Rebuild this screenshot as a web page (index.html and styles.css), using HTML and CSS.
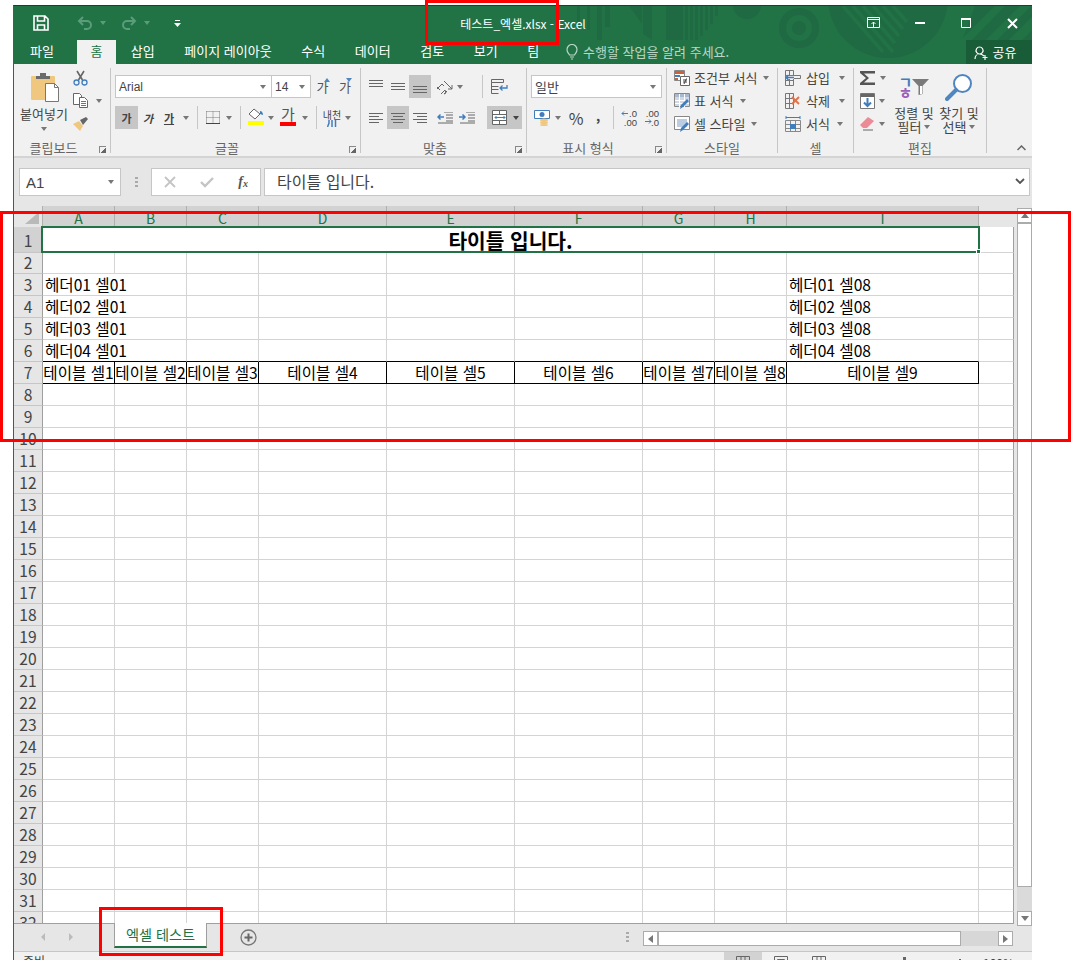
FILE: index.html
```html
<!doctype html>
<html lang="ko">
<head>
	<meta charset="UTF-8">
	<title>테스트_엑셀.xlsx - Excel</title>
	<link rel="stylesheet" href="styles.css">
</head>
<body>
<div class="app">
	<div class="head">
		<!-- title bar artwork -->
		<svg class="decor" width="1018" height="58" viewBox="14 6 1018 58">
			<g fill="#1f6a42">
				<rect x="577" y="0" width="3" height="30"/><rect x="587" y="0" width="3" height="30"/>
				<rect x="597" y="0" width="5" height="40"/><rect x="605" y="0" width="5" height="27"/>
				<path d="M625 0h17v24z"/><path d="M643 0h9v40l-9-6z"/>
				<rect x="666" y="0" width="17" height="40"/>
				<rect x="685" y="0" width="3" height="40"/><rect x="690" y="0" width="3" height="40"/><rect x="695" y="0" width="3" height="40"/><rect x="700" y="0" width="3" height="36"/><rect x="705" y="0" width="3" height="30"/><rect x="710" y="0" width="3" height="24"/><rect x="715" y="0" width="3" height="16"/>
				<circle cx="747" cy="5" r="14"/>
				<circle cx="799" cy="28" r="20"/>
				<circle cx="888" cy="-2" r="60"/>
				<path d="M985 64l47-47v-12l-59 59zM1010 64l22-22v-12l-34 34z"/>
				<path d="M975 6h20l-32 32zM1005 6h15l-45 45 -6-8z"/>
			</g>
			<circle cx="799" cy="28" r="13" fill="#217346"/>
			<circle cx="799" cy="28" r="7" fill="#1f6a42"/>
			<path d="M843 6l40 46M853 6l40 46M863 6l32 37M873 6l26 30M883 6l20 23M893 6l14 16" stroke="#217346" stroke-width="3.5" fill="none"/>
		</svg>
		<div class="titlebar">
			<div class="qat">
				<svg class="i-save" width="16" height="16" viewBox="0 0 16 16"><path d="M1 1h11l3 3v11H1z M4.500 1v5h7V1 M4.500 15v-5h7v5" fill="none" stroke="#fff" stroke-width="1.600"/></svg>
				<svg class="i-undo" width="16" height="14" viewBox="0 0 16 14"><path d="M6 1L2 5l4 4M2 5h8a4 4 0 0 1 0 8H7" fill="none" stroke="#5b9c7b" stroke-width="2"/></svg>
				<span class="caret dim"></span>
				<svg class="i-redo" width="16" height="14" viewBox="0 0 16 14"><path d="M10 1l4 4-4 4M14 5H6a4 4 0 0 0 0 8h3" fill="none" stroke="#5b9c7b" stroke-width="2"/></svg>
				<span class="caret dim"></span>
				<svg class="i-custom" width="7" height="8" viewBox="0 0 7 8"><path d="M1 1h5v1H1z M0 4h7L3.500 8z" fill="#fff"/></svg>
			</div>
			<div class="doc-title">테스트_엑셀.xlsx - Excel</div>
			<div class="winbtns">
				<div class="winbtn"><svg width="14" height="12" viewBox="0 0 14 12"><path d="M.500 .500h12v10h-12z M.500 2.500h12" fill="none" stroke="#fff"/><path d="M6.500 10V5M4.500 7l2-2 2 2" fill="none" stroke="#fff"/></svg></div>
				<div class="winbtn"><svg width="10" height="3" viewBox="0 0 10 3"><path d="M0 0h10v2H0z" fill="#fff"/></svg></div>
				<div class="winbtn"><svg width="11" height="11" viewBox="0 0 11 11"><path d="M.500 .500h9v9h-9z" fill="none" stroke="#fff"/><path d="M0 0h10v2H0z" fill="#fff"/></svg></div>
				<div class="winbtn"><svg width="11" height="11" viewBox="0 0 11 11"><path d="M1 1l9 9M10 1l-9 9" fill="none" stroke="#fff" stroke-width="2"/></svg></div>
			</div>
		</div>
		<div class="tabs">
			<div class="tab first">파일</div>
			<div class="tab active">홈</div>
			<div class="tab">삽입</div>
			<div class="tab">페이지 레이아웃</div>
			<div class="tab">수식</div>
			<div class="tab">데이터</div>
			<div class="tab">검토</div>
			<div class="tab">보기</div>
			<div class="tab">팀</div>
			<div class="tellme">
				<svg width="12" height="16" viewBox="0 0 12 16"><path d="M3.500 11C2.500 9 1 8.500 1 5.500a5 5 0 0 1 10 0c0 3-1.500 3.500-2.500 5.500zM4 13h4M5 15h2" fill="none" stroke="#b9d6c6" stroke-width="1.200"/></svg>
				<span>수행할 작업을 알려 주세요.</span>
			</div>
			<div class="share">
				<svg width="15" height="15" viewBox="0 0 15 15"><path d="M1 14c0-3 2-5 4.500-5S9 10 10 11M5.500 9a3.500 3.500 0 1 1 .1 0M11 10v5M8.500 12.500h5" fill="none" stroke="#fff" stroke-width="1.200"/></svg>
				<span>공유</span>
			</div>
		</div>
	</div>

	<div class="ribbon">
		<div class="group g-clip">
			<div class="g-body">
				<div class="paste">
					<svg width="29" height="30" viewBox="0 0 29 30">
						<rect x="0" y="4" width="24" height="24" rx="1" fill="#efc77f"/>
						<path d="M5 7V4h4V1h6v3h4v3z" fill="#6b6b6b"/>
						<path d="M14.500 11.500h9l4 4v14h-13z" fill="#fff" stroke="#777"/>
						<path d="M23.500 11.500v4h4" fill="none" stroke="#777"/>
					</svg>
					<div class="paste-label">붙여넣기</div>
					<span class="caret"></span>
				</div>
				<div class="stack3 clip-tools">
					<div class="row3"><svg width="15" height="16" viewBox="0 0 15 16"><path d="M4 1l5.500 9M11 1L5.500 10" stroke="#666" stroke-width="1.600" fill="none"/><circle cx="3.500" cy="12.500" r="2.500" fill="none" stroke="#3f7dbd" stroke-width="1.300"/><circle cx="11.500" cy="12.500" r="2.500" fill="none" stroke="#3f7dbd" stroke-width="1.300"/></svg></div>
					<div class="row3"><svg width="16" height="15" viewBox="0 0 16 15"><path d="M.500 .500h6l2 2v9h-8z" fill="#fff" stroke="#666"/><path d="M6.500 4.500h5l3 3v7h-8z" fill="#fff" stroke="#666"/><path d="M8 8.500h5M8 10.500h5M8 12.500h5" stroke="#3f7dbd"/></svg><span class="caret c-copy"></span></div>
					<div class="row3"><svg width="16" height="14" viewBox="0 0 16 14"><path d="M0 7l6-3 4 5-3 5z" fill="#efc77f"/><path d="M7 3l6-3 2 2-5 6z" fill="#666"/></svg></div>
				</div>
			</div>
			<div class="g-label">클립보드</div>
			<span class="launcher"></span>
		</div>

		<div class="group g-font">
			<div class="g-body rows">
				<div class="row">
					<div class="combo w157"><span class="latin">Arial</span><span class="caret"></span></div>
					<div class="combo w40"><span class="latin">14</span><span class="caret"></span></div>
					<div class="btn w18 ml7 grow"><span class="gga">가</span><span class="tri up"></span></div>
					<div class="btn w18"><span class="gga">가</span><span class="tri down"></span></div>
				</div>
				<div class="row">
					<div class="btn w23 on fx-b">가</div>
					<div class="btn w20 fx-i">가</div>
					<div class="btn w22 fx-u">가</div>
					<div class="btn w12"><span class="caret"></span></div>
					<div class="sep"></div>
					<div class="btn w20"><svg width="14" height="13" viewBox="0 0 14 13"><path d="M.500 .500h13M.500 6.500h13M.500 .500v12M7 .500v12M13.500 .500v12" stroke="#777" stroke-dasharray="1 1" fill="none"/><path d="M0 12.500h14" stroke="#444"/></svg></div>
					<div class="btn w12"><span class="caret"></span></div>
					<div class="sep"></div>
					<div class="btn w19 swatch"><svg width="16" height="12" viewBox="0 0 16 12"><path d="M6 1l6 5-5 5-6-5z" fill="#fff" stroke="#666"/><path d="M12 3c2 0 3 2 3 4l-3-1z" fill="#3f7dbd"/></svg><span class="bar yellow"></span></div>
					<div class="btn w12"><span class="caret"></span></div>
					<div class="btn w22 swatch"><span class="gga big">가</span><span class="bar red"></span></div>
					<div class="btn w12"><span class="caret"></span></div>
					<div class="sep"></div>
					<div class="btn w20 ruby"><span>내천</span><svg width="10" height="7" viewBox="0 0 10 7"><path d="M2 0v3L.500 7M5 0v7M8.500 0v7" stroke="#3f7dbd" stroke-width="1.500" fill="none"/></svg></div>
					<div class="btn w12"><span class="caret"></span></div>
				</div>
			</div>
			<div class="g-label">글꼴</div>
			<span class="launcher"></span>
		</div>

		<div class="group g-align">
			<div class="g-body rows">
				<div class="row">
					<div class="btn w22 a-top"><svg width="14" height="7" viewBox="0 0 14 7"><path d="M0 .500h14M0 3.500h14M0 6.500h14" stroke="#666"/></svg></div>
					<div class="btn w22"><svg width="14" height="7" viewBox="0 0 14 7"><path d="M0 .500h14M0 3.500h14M0 6.500h14" stroke="#666"/></svg></div>
					<div class="btn w22 on a-bot"><svg width="14" height="7" viewBox="0 0 14 7"><path d="M0 .500h14M0 3.500h14M0 6.500h14" stroke="#666"/></svg></div>
					<div class="btn w20 ml4"><svg width="18" height="16" viewBox="0 0 18 16"><path d="M1 10l5-5 2 2M1 8l3 3M5 15l4-4 1 3-2 1 3-3M8 2l8 8M16 6v4h-4" stroke="#666" fill="none"/></svg></div>
					<div class="btn w10"><span class="caret"></span></div>
					<div class="sep ml17"></div>
					<div class="btn w22"><svg width="17" height="15" viewBox="0 0 17 15"><path d="M.500 .500h12v3h-12zM.500 3.500v11M.500 7.500h7M.500 10.500h7M.500 14.500h7" stroke="#666" fill="none"/><path d="M16 6v3h-7M11.500 6.500L9 9l2.500 2.500" stroke="#3f7dbd" fill="none" stroke-width="1.300"/></svg></div>
				</div>
				<div class="row">
					<div class="btn w22"><svg width="14" height="10" viewBox="0 0 14 10"><path d="M0 .500h14M0 3.500h10M0 6.500h14M0 9.500h10" stroke="#666"/></svg></div>
					<div class="btn w22 on"><svg width="14" height="10" viewBox="0 0 14 10"><path d="M0 .500h14M2 3.500h10M0 6.500h14M2 9.500h10" stroke="#666"/></svg></div>
					<div class="btn w22"><svg width="14" height="10" viewBox="0 0 14 10"><path d="M0 .500h14M4 3.500h10M0 6.500h14M4 9.500h10" stroke="#666"/></svg></div>
					<div class="btn w22 ml3"><svg width="16" height="12" viewBox="0 0 16 12"><path d="M7 .500h9M9 3.500h7M9 6.500h7M9 9.500h7M1 11.500h15" stroke="#666" transform="translate(0 -.5)"/><path d="M7 5H1M3.500 2.500L1 5l2.500 2.500" stroke="#3f7dbd" stroke-width="1.500" fill="none"/></svg></div>
					<div class="btn w22"><svg width="16" height="12" viewBox="0 0 16 12"><path d="M7 .500h9M9 3.500h7M9 6.500h7M9 9.500h7M1 11.500h15" stroke="#666" transform="translate(0 -.5)"/><path d="M0 5h6M3.500 2.500L6 5 3.500 7.500" stroke="#3f7dbd" stroke-width="1.500" fill="none"/></svg></div>
					<div class="btn merge on">
						<svg width="18" height="15" viewBox="0 0 18 15"><path d="M.500 .500h14v14h-14zM.500 4.500h14M.500 10.500h14M7.500 .500v4M7.500 10.500v4" transform="translate(1 0)" fill="#fff" stroke="#666"/><path d="M4 7.500h10M5.500 6L4 7.500 5.500 9M12.500 6L14 7.500 12.500 9" stroke="#3f7dbd" fill="none"/></svg>
						<span class="caret dark"></span>
					</div>
				</div>
			</div>
			<div class="g-label">맞춤</div>
			<span class="launcher"></span>
		</div>

		<div class="group g-num">
			<div class="g-body rows">
				<div class="row">
					<div class="combo w131"><span>일반</span><span class="caret"></span></div>
				</div>
				<div class="row">
					<div class="btn w20 ml1"><svg width="16" height="16" viewBox="0 0 16 16"><path d="M.500 .500h15v8h-15z" fill="#fff" stroke="#3f7dbd"/><circle cx="8" cy="4.500" r="2.500" fill="#3f7dbd"/><ellipse cx="10" cy="10" rx="4" ry="1.500" fill="#efc77f"/><ellipse cx="10" cy="12.500" rx="4" ry="1.500" fill="#efc77f"/><ellipse cx="10" cy="15" rx="4" ry="1" fill="#efc77f"/></svg></div>
					<div class="btn w12"><span class="caret"></span></div>
					<div class="btn w24 sym">%</div>
					<div class="btn w20 sym comma">,</div>
					<div class="sep"></div>
					<div class="btn w22 dec"><span class="tiny">.0</span><span class="tiny">.00</span><svg class="dec-arrow left" width="7" height="5" viewBox="0 0 7 5"><path d="M7 2.500H1M3 .500l-2 2 2 2" stroke="#3f7dbd" fill="none"/></svg></div>
					<div class="btn w22 dec"><span class="tiny">.00</span><span class="tiny">.0</span><svg class="dec-arrow right" width="7" height="5" viewBox="0 0 7 5"><path d="M0 2.500h6M4 .500l2 2-2 2" stroke="#3f7dbd" fill="none"/></svg></div>
				</div>
			</div>
			<div class="g-label">표시 형식</div>
			<span class="launcher"></span>
		</div>

		<div class="group g-style">
			<div class="g-body">
				<div class="stack3">
					<div class="row3"><svg width="16" height="16" viewBox="0 0 16 16"><path d="M.500 .500h10v10h-10z" fill="#fff" stroke="#888"/><path d="M1 1h9v3H1z" fill="#d0603a"/><path d="M1 5h5v2H1z" fill="#3f7dbd"/><path d="M1 8h3v2H1z" fill="#d0603a"/><path d="M6.500 6.500h9v9h-9z" fill="#fff" stroke="#666"/><path d="M9 10h4M9 12h4M12.500 8.500l-2.500 5.500" stroke="#444" fill="none"/></svg><span>조건부 서식</span><span class="caret"></span></div>
					<div class="row3"><svg width="16" height="16" viewBox="0 0 16 16"><path d="M.500 .500h15v13h-15z" fill="#fff" stroke="#888"/><path d="M1 1h14v3H1z" fill="#a9b9cf"/><path d="M1 4h14v9H1z" fill="#cfd9e6"/><path d="M5.500 1v13M10.500 1v13M1 7.500h14M1 10.500h14" stroke="#fff"/><path d="M15 8l-6 6-3 2 1-4 6-6z" fill="#3f7dbd"/></svg><span>표 서식</span><span class="caret"></span></div>
					<div class="row3"><svg width="16" height="16" viewBox="0 0 16 16"><path d="M.500 .500h15v13h-15z" fill="#fff" stroke="#888"/><path d="M3 3h10v8H3z" fill="#bccde0"/><path d="M15 8l-6 6-3 2 1-4 6-6z" fill="#3f7dbd"/></svg><span>셀 스타일</span><span class="caret"></span></div>
				</div>
			</div>
			<div class="g-label">스타일</div>
		</div>

		<div class="group g-cells">
			<div class="g-body">
				<div class="stack3">
					<div class="row3"><svg width="16" height="16" viewBox="0 0 16 16"><path d="M.500 .500h8v15h-8zM.500 5.500h8M.500 10.500h8M4.500 .500v15M9 5.500h6.500v3H9" fill="none" stroke="#777"/><path d="M1 6h8v3H1z" fill="#f1f1f1"/><path d="M9 7.500H1M3.500 5L1 7.500 3.500 10" stroke="#3f7dbd" stroke-width="1.500" fill="none"/></svg><span>삽입</span><span class="caret c-far"></span></div>
					<div class="row3"><svg width="16" height="16" viewBox="0 0 16 16"><path d="M.500 .500h8v15h-8zM.500 5.500h8M.500 10.500h8M4.500 .500v15" fill="none" stroke="#777"/><path d="M7 4l7 7M14 4l-7 7" stroke="#e0714a" stroke-width="1.800"/></svg><span>삭제</span><span class="caret c-far"></span></div>
					<div class="row3"><svg width="16" height="16" viewBox="0 0 16 16"><path d="M.500 4.500h15v11h-15zM.500 8.500h15M.500 12.500h15M5.500 4.500v11M10.500 4.500v11" fill="none" stroke="#888"/><path d="M5 8h6v5H5z" fill="#3f7dbd"/><path d="M1 1.500h14M1 0v3M15 0v3" stroke="#3f7dbd"/></svg><span>서식</span><span class="caret"></span></div>
				</div>
			</div>
			<div class="g-label">셀</div>
		</div>

		<div class="group g-edit">
			<div class="g-body">
				<div class="stack3 edit-tools">
					<div class="row3"><svg width="16" height="14" viewBox="0 0 16 14"><path d="M0 0h15v2.500H4l5 4.500-5 4.500h11V14H0v-2l6-5-6-5z" fill="#555"/></svg><span class="caret"></span></div>
					<div class="row3"><svg width="15" height="16" viewBox="0 0 15 16"><path d="M.500 .500h14v15h-14z" fill="#fff" stroke="#777"/><path d="M1 1h13v3H1z" fill="#666"/><path d="M7.500 5v8M4 9.500l3.500 3.500L11 9.500" stroke="#3f7dbd" stroke-width="2" fill="none"/></svg><span class="caret"></span></div>
					<div class="row3"><svg width="15" height="14" viewBox="0 0 15 14"><path d="M0 8l8-8 6 4-7 7H3z" fill="#ec8a96"/><path d="M3 13h10" stroke="#666"/></svg><span class="caret"></span></div>
				</div>
				<div class="big-btn">
					<div class="big-icon sort">
						<span class="jamo"><b class="blue">ㄱ</b><b class="purple">ㅎ</b></span>
						<svg width="17" height="16" viewBox="0 0 17 16"><path d="M0 0h17L10.500 7v8l-4 1V7z" fill="#7a7a7a"/><path d="M8 7h2v8H8z" fill="#fff"/></svg>
					</div>
					<div class="big-text">정렬 및</div>
					<div class="big-text">필터<span class="caret"></span></div>
				</div>
				<div class="big-btn find">
					<div class="big-icon">
						<svg width="28" height="28" viewBox="0 0 28 28"><circle cx="17.500" cy="10.500" r="8.500" fill="#fff" stroke="#4f86c0" stroke-width="2"/><path d="M11 17L2 26" stroke="#4f86c0" stroke-width="4" stroke-linecap="round"/></svg>
					</div>
					<div class="big-text">찾기 및</div>
					<div class="big-text">선택<span class="caret"></span></div>
				</div>
			</div>
			<div class="g-label">편집</div>
		</div>

		<svg class="collapse" width="9" height="6" viewBox="0 0 9 6"><path d="M.500 5l4-4 4 4" stroke="#666" stroke-width="1.500" fill="none"/></svg>
	</div>

	<div class="fbar">
		<div class="namebox"><span class="latin">A1</span><span class="caret"></span></div>
		<div class="dots"></div>
		<div class="fbtns">
			<svg width="12" height="12" viewBox="0 0 12 12"><path d="M1 1l10 10M11 1L1 11" stroke="#c4c4c4" stroke-width="1.800"/></svg>
			<svg width="14" height="12" viewBox="0 0 14 12"><path d="M1 6l4 4 8-8" stroke="#c4c4c4" stroke-width="2.400" fill="none"/></svg>
			<span class="fx">f<sub>x</sub></span>
		</div>
		<div class="finput"><span>타이틀 입니다.</span><svg width="10" height="6" viewBox="0 0 10 6"><path d="M1 1l4 4 4-4" stroke="#555" stroke-width="1.800" fill="none"/></svg></div>
	</div>

	<div class="sheet">
		<div class="gridwrap">
			<table class="grid">
				<colgroup><col class="c-rh"><col class="c-s"><col class="c-s"><col class="c-s"><col class="c-m"><col class="c-m"><col class="c-m"><col class="c-s"><col class="c-s"><col class="c-l"><col class="c-j"></colgroup>
				<tr class="hdr"><th class="corner"><span class="tri-corner"></span></th><th class="sel">A</th><th class="sel">B</th><th class="sel">C</th><th class="sel">D</th><th class="sel">E</th><th class="sel">F</th><th class="sel">G</th><th class="sel">H</th><th class="sel">I</th><th class="rest"></th></tr>
				<tr class="r1"><th class="sel">1</th><td colspan="9" class="title-cell">타이틀 입니다.<span class="cursor"><span class="handle"></span></span></td><td></td></tr>
				<tr class="r2"><th>2</th><td></td><td></td><td></td><td></td><td></td><td></td><td></td><td></td><td></td><td></td></tr>
				<tr><th>3</th><td colspan="2" class="txt">헤더01 셀01</td><td></td><td></td><td></td><td></td><td></td><td></td><td class="txt">헤더01 셀08</td><td></td></tr>
				<tr><th>4</th><td colspan="2" class="txt">헤더02 셀01</td><td></td><td></td><td></td><td></td><td></td><td></td><td class="txt">헤더02 셀08</td><td></td></tr>
				<tr><th>5</th><td colspan="2" class="txt">헤더03 셀01</td><td></td><td></td><td></td><td></td><td></td><td></td><td class="txt">헤더03 셀08</td><td></td></tr>
				<tr class="above"><th>6</th><td colspan="2" class="txt">헤더04 셀01</td><td></td><td></td><td></td><td></td><td></td><td></td><td class="txt">헤더04 셀08</td><td class="plain"></td></tr>
				<tr class="boxed"><th>7</th><td>테이블 셀1</td><td>테이블 셀2</td><td>테이블 셀3</td><td>테이블 셀4</td><td>테이블 셀5</td><td>테이블 셀6</td><td>테이블 셀7</td><td>테이블 셀8</td><td>테이블 셀9</td><td class="plain"></td></tr>
				<tr><th>8</th><td></td><td></td><td></td><td></td><td></td><td></td><td></td><td></td><td></td><td></td></tr>
				<tr><th>9</th><td></td><td></td><td></td><td></td><td></td><td></td><td></td><td></td><td></td><td></td></tr>
				<tr><th>10</th><td></td><td></td><td></td><td></td><td></td><td></td><td></td><td></td><td></td><td></td></tr>
				<tr><th>11</th><td></td><td></td><td></td><td></td><td></td><td></td><td></td><td></td><td></td><td></td></tr>
				<tr><th>12</th><td></td><td></td><td></td><td></td><td></td><td></td><td></td><td></td><td></td><td></td></tr>
				<tr><th>13</th><td></td><td></td><td></td><td></td><td></td><td></td><td></td><td></td><td></td><td></td></tr>
				<tr><th>14</th><td></td><td></td><td></td><td></td><td></td><td></td><td></td><td></td><td></td><td></td></tr>
				<tr><th>15</th><td></td><td></td><td></td><td></td><td></td><td></td><td></td><td></td><td></td><td></td></tr>
				<tr><th>16</th><td></td><td></td><td></td><td></td><td></td><td></td><td></td><td></td><td></td><td></td></tr>
				<tr><th>17</th><td></td><td></td><td></td><td></td><td></td><td></td><td></td><td></td><td></td><td></td></tr>
				<tr><th>18</th><td></td><td></td><td></td><td></td><td></td><td></td><td></td><td></td><td></td><td></td></tr>
				<tr><th>19</th><td></td><td></td><td></td><td></td><td></td><td></td><td></td><td></td><td></td><td></td></tr>
				<tr><th>20</th><td></td><td></td><td></td><td></td><td></td><td></td><td></td><td></td><td></td><td></td></tr>
				<tr><th>21</th><td></td><td></td><td></td><td></td><td></td><td></td><td></td><td></td><td></td><td></td></tr>
				<tr><th>22</th><td></td><td></td><td></td><td></td><td></td><td></td><td></td><td></td><td></td><td></td></tr>
				<tr><th>23</th><td></td><td></td><td></td><td></td><td></td><td></td><td></td><td></td><td></td><td></td></tr>
				<tr><th>24</th><td></td><td></td><td></td><td></td><td></td><td></td><td></td><td></td><td></td><td></td></tr>
				<tr><th>25</th><td></td><td></td><td></td><td></td><td></td><td></td><td></td><td></td><td></td><td></td></tr>
				<tr><th>26</th><td></td><td></td><td></td><td></td><td></td><td></td><td></td><td></td><td></td><td></td></tr>
				<tr><th>27</th><td></td><td></td><td></td><td></td><td></td><td></td><td></td><td></td><td></td><td></td></tr>
				<tr><th>28</th><td></td><td></td><td></td><td></td><td></td><td></td><td></td><td></td><td></td><td></td></tr>
				<tr><th>29</th><td></td><td></td><td></td><td></td><td></td><td></td><td></td><td></td><td></td><td></td></tr>
				<tr><th>30</th><td></td><td></td><td></td><td></td><td></td><td></td><td></td><td></td><td></td><td></td></tr>
				<tr><th>31</th><td></td><td></td><td></td><td></td><td></td><td></td><td></td><td></td><td></td><td></td></tr>
				<tr><th>32</th><td></td><td></td><td></td><td></td><td></td><td></td><td></td><td></td><td></td><td></td></tr>
			</table>
		</div>
		<div class="vscroll">
			<div class="sb-btn"><span class="tri-up"></span></div>
			<div class="v-thumb"></div>
			<div class="v-track"></div>
			<div class="sb-btn"><span class="tri-down"></span></div>
		</div>
	</div>

	<div class="tabbar">
		<span class="nav-tri left"></span>
		<span class="nav-tri right"></span>
		<div class="sheet-tab">엑셀 테스트</div>
		<svg class="addsheet" width="17" height="17" viewBox="0 0 17 17"><circle cx="8.500" cy="8.500" r="7.500" fill="none" stroke="#777" stroke-width="1.300"/><path d="M8.500 4.500v8M4.500 8.500h8" stroke="#666" stroke-width="2"/></svg>
		<div class="dots tab-dots"></div>
		<div class="hscroll">
			<div class="sb-btn"><span class="tri-left"></span></div>
			<div class="h-thumb"></div>
			<div class="h-track"></div>
			<div class="sb-btn"><span class="tri-right"></span></div>
		</div>
	</div>

	<div class="status">
		<span class="ready">준비</span>
		<div class="view on"><svg width="14" height="8" viewBox="0 0 14 8"><path d="M.500 8V.500h13V8M5 0v8M9 0v8" fill="none" stroke="#666"/></svg></div>
		<div class="view"><svg width="14" height="8" viewBox="0 0 14 8"><path d="M.500 8V.500h13V8M3.500 8V3.500h7V8" fill="none" stroke="#666"/></svg></div>
		<div class="view"><svg width="14" height="8" viewBox="0 0 14 8"><path d="M.500 8V.500h13V8M5 0v8M9 0v8" fill="none" stroke="#666"/></svg></div>
		<span class="slider-tick"></span>
		<span class="plus"></span>
		<span class="zoom">100%</span>
	</div>
</div>

<!-- red marks drawn on top of the screenshot -->
<div class="mark m-title"></div>
<div class="mark m-grid"></div>
<div class="mark m-tab"></div>
</body>
</html>
```

FILE: styles.css
```css
* {
	box-sizing: border-box;
}
html, body {
	margin: 0;
	height: 960px;
	overflow: hidden;
	background: #fff;
}
body {
	position: relative;
	font-family: "Noto Sans CJK KR", "Liberation Sans", sans-serif;
	font-size: 13px;
	color: #444;
}
svg {
	display: block;
	flex: none;
}
.latin {
	font-family: "Liberation Sans", sans-serif;
}

.app {
	margin: 5px 0 0 13px;
	width: 1019px;
	height: 955px;
	border-top: 1px solid #333;
	border-left: 1px solid #217346;
	background: #e6e6e6;
	overflow: hidden;
}

/* title + tabs */
.head {
	position: relative;
	height: 58px;
	background: #217346;
	overflow: hidden;
}
.decor {
	position: absolute;
	left: 0;
	top: 0;
}
.titlebar {
	position: relative;
	height: 34px;
	display: grid;
	grid-template-columns: 1fr auto 1fr;
	align-items: center;
}
.qat {
	display: flex;
	align-items: center;
	padding: 0 0 0 19px;
}
.i-undo { margin-left: 28px; }
.i-redo { margin-left: 15px; }
.i-custom { margin-left: 24px; }
.qat .caret { margin-left: 7px; }
.doc-title {
	color: #fff;
	font-size: 12px;
	margin-top: 1px;
}
.winbtns {
	display: flex;
	justify-content: flex-end;
	margin-right: -3px;
}
.winbtn {
	width: 46px;
	height: 30px;
	display: flex;
	align-items: center;
	justify-content: center;
}

.tabs {
	position: relative;
	height: 24px;
	display: flex;
	color: #fff;
	line-height: 22px;
}
.tab {
	padding: 0 14.8px;
}
.tab.first {
	width: 63px;
	padding-left: 16px;
}
.tab.active {
	width: 39px;
	padding: 0;
	text-align: center;
	background: #f1f1f1;
	color: #217346;
}
.tellme {
	display: flex;
	align-items: center;
	gap: 5px;
	margin-left: 12px;
	color: #b9d6c6;
}
.share {
	margin-left: auto;
	width: 66px;
	padding-right: 8px;
	display: flex;
	align-items: center;
	justify-content: center;
	gap: 4px;
	background: #195c38;
}

/* ribbon */
.ribbon {
	position: relative;
	height: 94px;
	padding: 4px 0;
	display: flex;
	background: #f1f1f1;
	border-bottom: 2px solid #d4d4d4;
}
.group {
	position: relative;
	height: 85px;
	border-right: 1px solid #c6c6c6;
	display: flex;
	flex-direction: column;
}
.g-clip { width: 97px; }
.g-font { width: 250px; }
.g-align { width: 166px; }
.g-num { width: 140px; }
.g-style { width: 111px; }
.g-cells { width: 76px; }
.g-edit { width: 133px; }
.g-body {
	flex: 1;
	padding: 7px 0 0 4px;
	display: flex;
}
.g-body.rows {
	flex-direction: column;
	gap: 8px;
}
.g-label {
	height: 16px;
	margin-bottom: -3px;
	line-height: 16px;
	text-align: center;
	color: #666;
}
.g-clip .g-label,
.g-font .g-label,
.g-align .g-label,
.g-num .g-label {
	padding-right: 17px;
}
.launcher {
	position: absolute;
	right: 4px;
	bottom: 0;
	width: 7px;
	height: 7px;
	border-left: 1px solid #888;
	border-top: 1px solid #888;
	background: linear-gradient(135deg, transparent 55%, #666 55%);
}
.row {
	height: 23px;
	display: flex;
	align-items: center;
}
.btn {
	position: relative;
	height: 23px;
	flex: none;
	display: flex;
	align-items: center;
	justify-content: center;
}
.btn.on {
	background: #c6c6c6;
}
.w10 { width: 10px; }
.w12 { width: 12px; }
.w18 { width: 18px; }
.w19 { width: 19px; }
.w20 { width: 20px; }
.w22 { width: 22px; }
.w23 { width: 23px; }
.w24 { width: 24px; }
.w40 { width: 40px; }
.w131 { width: 131px; }
.w157 { width: 157px; }
.ml1 { margin-left: 1px; }
.ml3 { margin-left: 3px; }
.ml4 { margin-left: 4px; }
.ml7 { margin-left: 7px; }
.ml17 { margin-left: 17px; }
.sep {
	flex: none;
	width: 1px;
	height: 23px;
	margin: 0 5px;
	background: #c6c6c6;
}
.sep.ml17 {
	margin-left: 17px;
}
.caret {
	display: inline-block;
	flex: none;
	width: 0;
	height: 0;
	border-left: 3.5px solid transparent;
	border-right: 3.5px solid transparent;
	border-top: 4px solid #777;
}
.caret.dim { border-top-color: #5b9c7b; }
.caret.dark { border-top-color: #444; }
.combo {
	height: 23px;
	flex: none;
	display: flex;
	align-items: center;
	justify-content: space-between;
	padding: 0 5px 0 3px;
	background: #fff;
	border: 1px solid #c6c6c6;
	font-size: 12px;
}
.combo + .combo {
	margin-left: -1px;
}
.g-num .combo {
	font-size: 13px;
}
.gga {
	font-size: 13px;
	color: #555;
}
.grow .gga {
	margin-right: 9px;
}
.gga.big {
	font-size: 15px;
	line-height: 15px;
}
.tri {
	position: absolute;
	width: 0;
	height: 0;
	border-left: 3px solid transparent;
	border-right: 3px solid transparent;
}
.tri.up { top: 3px; right: 6px; border-bottom: 4px solid #4f86c0; }
.tri.down { top: 3px; right: 2px; border-top: 4px solid #4f86c0; }
.fx-b { font-weight: 700; font-size: 11px; color: #444; }
.fx-i { font-style: italic; font-weight: 700; font-size: 11px; }
.fx-u { font-size: 11px; font-weight: 700; text-decoration: underline; }
.swatch {
	flex-direction: column;
	justify-content: flex-start;
}
.swatch svg {
	margin-top: 2px;
}
.swatch .bar {
	width: 16px;
	height: 4px;
	margin-top: 1px;
}
.bar.yellow { background: #ff0; }
.bar.red { background: #f00; }
.ruby {
	flex-direction: column;
	gap: 0;
	font-size: 10px;
	line-height: 11px;
}
.a-top svg { margin-bottom: 6px; }
.a-bot svg { margin-top: 6px; }
.merge {
	width: 35px;
	margin-left: 9px;
	gap: 4px;
}
.sym { font-size: 16px; color: #444; }
.comma { font-weight: 700; font-size: 13px; padding-bottom: 4px; }
.dec {
	flex-direction: column;
	align-items: flex-end;
	padding-right: 4px;
}
.tiny {
	font-family: "Liberation Sans", sans-serif;
	font-size: 9.5px;
	line-height: 9px;
	color: #444;
}
.dec-arrow {
	position: absolute;
	left: 4px;
}
.dec-arrow.left { top: 5px; left: 2px; }
.dec-arrow.right { top: 13px; }

/* stacks of three small buttons */
.paste {
	width: 48px;
	margin: -3px 0 0 2px;
	display: flex;
	flex-direction: column;
	align-items: center;
}
.paste svg { margin-left: 3px; }
.paste-label {
	margin-top: 4px;
	line-height: 16px;
	white-space: nowrap;
}
.paste .caret { margin-top: 5px; }
.stack3 {
	margin-top: -9px;
	display: flex;
	flex-direction: column;
}
.row3 {
	height: 23px;
	display: flex;
	align-items: center;
	gap: 4px;
	white-space: nowrap;
}
.clip-tools { margin-left: 5px; }
.c-copy { margin-left: 3px; }
.g-style .g-body { padding-left: 7px; }
.g-cells .g-body { padding-left: 7px; }
.g-cells .row3 { gap: 5px; }
.c-far { margin-left: 3px; }
.g-style .row3 .caret,
.g-cells .row3 .caret { margin-left: 2px; }
.g-cells .row3 .c-far { margin-left: 4px; }
.g-edit .g-body { padding-left: 6px; }
.edit-tools { width: 33px; }

.big-btn {
	width: 42px;
	margin-top: -3px;
	display: flex;
	flex-direction: column;
	align-items: center;
	text-align: center;
}
.big-btn.find {
	margin-left: 3px;
}
.big-icon {
	height: 29px;
	display: flex;
	align-items: center;
}
.jamo {
	display: flex;
	flex-direction: column;
	font-size: 15px;
	line-height: 11px;
}
.jamo b { font-weight: 700; }
.blue { color: #3f7dbd; }
.purple { color: #9a5fb8; }
.big-text {
	height: 14px;
	line-height: 14px;
	white-space: nowrap;
	display: flex;
	align-items: center;
	gap: 3px;
}
.big-icon + .big-text { margin-top: 5px; }
.collapse {
	position: absolute;
	right: 6px;
	bottom: 5px;
}

/* formula bar */
.fbar {
	height: 48px;
	padding: 10px 2px 0 5px;
	display: flex;
	align-items: flex-start;
	background: #e6e6e6;
}
.namebox, .fbtns, .finput {
	height: 28px;
	background: #fff;
	border: 1px solid #c6c6c6;
	display: flex;
	align-items: center;
}
.namebox {
	width: 102px;
	padding: 0 6px;
	justify-content: space-between;
	font-size: 15px;
}
.dots {
	width: 3px;
	height: 11px;
	margin: 9px 13px 0 14px;
	background: repeating-linear-gradient(#aaa 0 2px, transparent 2px 4px);
}
.fbtns {
	width: 110px;
	padding: 0 12px;
	justify-content: space-between;
	margin-right: 3px;
}
.fx {
	font-family: "Liberation Serif", serif;
	font-style: italic;
	font-weight: 700;
	font-size: 14px;
	color: #555;
}
.fx sub {
	font-size: 10px;
	vertical-align: -1px;
}
.finput {
	flex: 1;
	padding: 0 4px 2px 12px;
	justify-content: space-between;
	font-size: 16px;
}

/* sheet */
.sheet {
	height: 718px;
	display: flex;
	background: #e6e6e6;
}
.gridwrap {
	width: 1000px;
	height: 718px;
	overflow: hidden;
	border-bottom: 1px solid #a0a0a0;
}
.grid {
	width: 1000px;
	table-layout: fixed;
	border-collapse: separate;
	border-spacing: 0;
	background: #fff;
	font-size: 15.6px;
	color: #000;
}
.c-rh { width: 29px; }
.c-s { width: 72px; }
.c-m { width: 128px; }
.c-l { width: 192px; }
.c-j { width: 35px; }
.grid tr {
	height: 22px;
}
.grid tr.hdr { height: 21px; }
.grid tr.r1 { height: 26px; }
.grid tr.r2 { height: 21px; }
.grid th, .grid td {
	padding: 0 0 2px;
	font-weight: 400;
	line-height: 18px;
	white-space: nowrap;
	border-right: 1px solid #d4d4d4;
	border-bottom: 1px solid #d4d4d4;
}
.grid .r1 th, .grid .r1 td {
	padding-bottom: 0;
}
.grid td:last-child {
	border-right-color: #9e9e9e;
}
.grid th {
	text-align: center;
	background: #e6e6e6;
	color: #444;
	border-right: 1px solid #9e9e9e;
	border-bottom: 1px solid #c6c6c6;
}
.hdr th {
	padding: 0;
	border-right: 1px solid #b0b0b0;
	border-bottom: none;
	color: #217346;
	vertical-align: bottom;
	line-height: 17px;
	font-size: 14px;
}
.grid th.sel {
	background: #d2d2d2;
}
.hdr th.rest {
	background: #e6e6e6;
	border-right: none;
}
.corner {
	position: relative;
}
.tri-corner {
	position: absolute;
	right: 3px;
	bottom: 3px;
	width: 0;
	height: 0;
	border-left: 14px solid transparent;
	border-bottom: 12px solid #b9b9b9;
}
.grid .title-cell {
	position: relative;
	text-align: center;
	font-size: 20.3px;
	font-weight: 700;
}
.cursor {
	position: absolute;
	left: -2px;
	top: -1px;
	right: -2px;
	bottom: -1px;
	border: 2px solid #217346;
}
.handle {
	position: absolute;
	right: -3px;
	bottom: -3px;
	width: 5px;
	height: 5px;
	background: #217346;
	border: 1px solid #fff;
}
.grid .txt {
	padding-left: 2px;
}
.above td {
	border-bottom-color: #000;
}
.grid .above td.plain {
	border-bottom-color: #d4d4d4;
}
.grid .boxed td {
	text-align: center;
	overflow-x: clip;
	border-right-color: #000;
	border-bottom-color: #000;
}
.grid .boxed td.plain {
	border-right-color: #9e9e9e;
	border-bottom-color: #d4d4d4;
}

/* scrollbars */
.vscroll {
	width: 15px;
	height: 718px;
	margin: 2px 0 0 3px;
	display: flex;
	flex-direction: column;
	background: #dadada;
}
.sb-btn {
	flex: none;
	width: 15px;
	height: 15px;
	background: #fff;
	border: 1px solid #ababab;
	display: flex;
	align-items: center;
	justify-content: center;
}
.v-thumb {
	height: 664px;
	background: #fff;
	border: 1px solid #ababab;
}
.v-track {
	flex: 1;
}
.tri-up, .tri-down, .tri-left, .tri-right {
	width: 0;
	height: 0;
	border: 4px solid transparent;
}
.tri-up { border-bottom: 5px solid #777; border-top: 0; }
.tri-down { border-top: 5px solid #777; border-bottom: 0; }
.tri-left { border-right: 5px solid #777; border-left: 0; }
.tri-right { border-left: 5px solid #777; border-right: 0; }

.tabbar {
	height: 28px;
	display: flex;
	background: #e6e6e6;
	border-bottom: 1px solid #c6c6c6;
	align-items: flex-start;
}
.nav-tri {
	width: 0;
	height: 0;
	margin-top: 9px;
	border-top: 4px solid transparent;
	border-bottom: 4px solid transparent;
}
.nav-tri.left {
	margin-left: 27px;
	border-right: 4px solid #bbb;
}
.nav-tri.right {
	margin-left: 24px;
	border-left: 4px solid #bbb;
}
.sheet-tab {
	width: 93px;
	height: 25px;
	margin-left: 41px;
	margin-top: -1px;
	background: #fff;
	border-left: 1px solid #9e9e9e;
	border-right: 1px solid #9e9e9e;
	border-bottom: 2px solid #217346;
	color: #217346;
	font-size: 14.2px;
	line-height: 23px;
	text-align: center;
}
.addsheet {
	margin: 5px 0 0 33px;
}
.tab-dots {
	margin: 8px 0 0 369px;
}
.hscroll {
	width: 370px;
	height: 15px;
	margin: 7px 0 0 14px;
	display: flex;
	background: #d7d7d7;
}
.h-thumb {
	width: 303px;
	background: #fff;
	border: 1px solid #ababab;
}
.h-track {
	flex: 1;
}

.status {
	position: relative;
	height: 20px;
	background: #f1f1f1;
	display: flex;
}
.ready {
	margin-left: 9px;
	width: 701px;
	font-size: 12px;
	line-height: 18px;
}
.view {
	width: 38px;
	padding-top: 4px;
	display: flex;
	justify-content: center;
}
.view.on {
	background: #d2d2d2;
}
.slider-tick {
	position: absolute;
	left: 889px;
	top: 5px;
	width: 3px;
	height: 10px;
	background: #666;
}
.plus {
	position: absolute;
	left: 945px;
	top: 7px;
	width: 2px;
	height: 10px;
	background: #666;
}
.zoom {
	position: absolute;
	left: 969px;
	top: 2px;
	font-size: 12px;
	line-height: 18px;
}

/* red annotation boxes */
.mark {
	position: absolute;
	border: 3px solid #f00;
}
.m-title {
	left: 425px;
	top: 0;
	width: 134px;
	height: 45px;
}
.m-grid {
	left: 0;
	top: 211px;
	width: 1071px;
	height: 231px;
}
.m-tab {
	left: 99px;
	top: 907px;
	width: 124px;
	height: 49px;
}
```
